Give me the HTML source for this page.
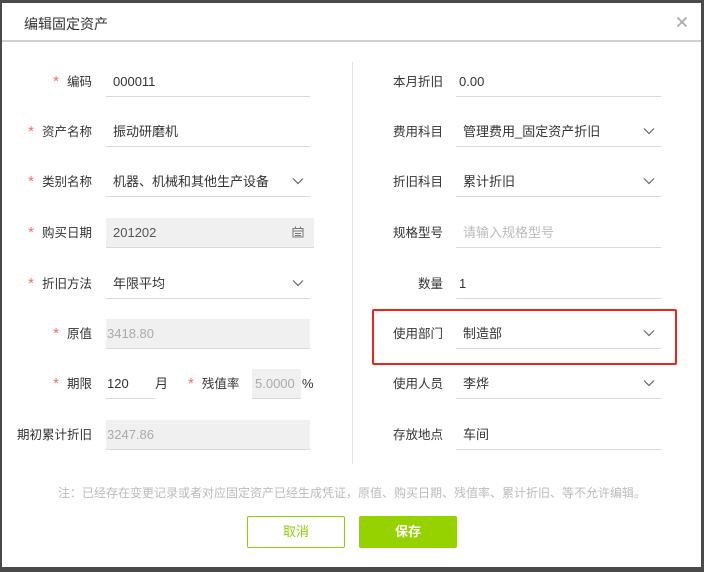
<!DOCTYPE html>
<html><head><meta charset="utf-8"><style>
*{margin:0;padding:0;box-sizing:border-box}
body{width:704px;height:572px;background:#4a4a4a;position:relative;overflow:hidden;font-family:"Liberation Sans","Noto Sans CJK SC",sans-serif;font-size:13px;color:#333}
.dlg{position:absolute;left:2px;top:3px;width:699px;height:564px;background:#fff}
.hd{position:absolute;left:2px;top:3px;width:699px;height:39px;border-bottom:2px solid #d0d0d0;background:#fff}
.t{position:absolute;left:22px;top:11px;font-size:14px;color:#333}
.x{position:absolute;left:674px;top:13px}
.a{position:absolute;white-space:nowrap;line-height:30px}
.lab{text-align:right;font-size:12.5px}
.req{color:#f56c6c;margin-right:8px;font-size:15px}
.in{position:absolute;height:30px;border-bottom:1px solid #d9d9d9;line-height:30px;padding-left:7px;white-space:nowrap}
.g{background:#f0f0f0;color:#aaa}
.ph{color:#bbb}
.ch{position:absolute;right:6px;top:10px}
</style></head><body>
<div class="dlg"></div>
<div class="hd"><div class="t">编辑固定资产</div>
<svg class="x" width="12" height="12" viewBox="0 0 12 12"><path d="M1.5 1.5L10.5 10.5M10.5 1.5L1.5 10.5" stroke="#aaa" stroke-width="1.8"/></svg></div>
<div style="position:absolute;left:352px;top:62px;width:1px;height:402px;background:#e2e2e2"></div>

<div class="a lab" style="right:612px;top:67px"><span class="req">*</span>编码</div>
<div class="a lab" style="right:612px;top:117px"><span class="req">*</span>资产名称</div>
<div class="a lab" style="right:612px;top:167px"><span class="req">*</span>类别名称</div>
<div class="a lab" style="right:612px;top:218px"><span class="req">*</span>购买日期</div>
<div class="a lab" style="right:612px;top:269px"><span class="req">*</span>折旧方法</div>
<div class="a lab" style="right:612px;top:319px"><span class="req">*</span>原值</div>
<div class="a lab" style="right:612px;top:369px"><span class="req">*</span>期限</div>
<div class="a lab" style="right:612px;top:420px">期初累计折旧</div>

<div class="in" style="left:106px;top:67px;width:204px">000011</div>
<div class="in" style="left:106px;top:117px;width:204px">振动研磨机</div>
<div class="in" style="left:106px;top:167px;width:204px">机器、机械和其他生产设备<svg class="ch" width="12" height="8" viewBox="0 0 12 8"><path d="M1 1.5L6 6.5L11 1.5" stroke="#666" fill="none" stroke-width="1.2"/></svg></div>
<div class="in g" style="left:106px;top:218px;width:208px;color:#555">201202<svg class="ch" style="right:10px;top:8px" width="12" height="12" viewBox="0 0 12 12"><path d="M1 2.5H11V11H1Z M1 5H11 M3.5 0.5V3 M8.5 0.5V3 M3 7.5H9 M3 9.5H9" stroke="#777" fill="none" stroke-width="1"/></svg></div>
<div class="in" style="left:106px;top:269px;width:204px">年限平均<svg class="ch" width="12" height="8" viewBox="0 0 12 8"><path d="M1 1.5L6 6.5L11 1.5" stroke="#666" fill="none" stroke-width="1.2"/></svg></div>
<div class="in g" style="left:106px;top:319px;width:204px;padding-left:1px">3418.80</div>
<div class="in" style="left:106px;top:369px;width:49px;padding-left:1px">120</div>
<div class="a" style="left:155px;top:369px">月</div>
<div class="a lab" style="left:188px;top:369px"><span class="req">*</span>残值率</div>
<div class="in g" style="left:252px;top:369px;width:49px;padding-left:3px">5.0000</div>
<div class="a" style="left:302px;top:369px">%</div>
<div class="in g" style="left:106px;top:420px;width:204px;padding-left:1px">3247.86</div>

<div class="a lab" style="right:261px;top:67px">本月折旧</div>
<div class="a lab" style="right:261px;top:117px">费用科目</div>
<div class="a lab" style="right:261px;top:167px">折旧科目</div>
<div class="a lab" style="right:261px;top:218px">规格型号</div>
<div class="a lab" style="right:261px;top:269px">数量</div>
<div class="a lab" style="right:261px;top:319px">使用部门</div>
<div class="a lab" style="right:261px;top:369px">使用人员</div>
<div class="a lab" style="right:261px;top:420px">存放地点</div>

<div class="in" style="left:456px;top:67px;width:205px;padding-left:3px">0.00</div>
<div class="in" style="left:456px;top:117px;width:205px">管理费用_固定资产折旧<svg class="ch" width="12" height="8" viewBox="0 0 12 8"><path d="M1 1.5L6 6.5L11 1.5" stroke="#666" fill="none" stroke-width="1.2"/></svg></div>
<div class="in" style="left:456px;top:167px;width:205px">累计折旧<svg class="ch" width="12" height="8" viewBox="0 0 12 8"><path d="M1 1.5L6 6.5L11 1.5" stroke="#666" fill="none" stroke-width="1.2"/></svg></div>
<div class="in ph" style="left:456px;top:218px;width:205px">请输入规格型号</div>
<div class="in" style="left:456px;top:269px;width:205px;padding-left:3px">1</div>
<div class="in" style="left:456px;top:319px;width:205px">制造部<svg class="ch" width="12" height="8" viewBox="0 0 12 8"><path d="M1 1.5L6 6.5L11 1.5" stroke="#666" fill="none" stroke-width="1.2"/></svg></div>
<div class="in" style="left:456px;top:369px;width:205px">李烨<svg class="ch" width="12" height="8" viewBox="0 0 12 8"><path d="M1 1.5L6 6.5L11 1.5" stroke="#666" fill="none" stroke-width="1.2"/></svg></div>
<div class="in" style="left:456px;top:420px;width:205px">车间</div>

<div style="position:absolute;left:372px;top:309px;width:305px;height:56px;border:2px solid #f0221b;border-radius:2px"></div>

<div class="a" style="left:58px;top:478px;font-size:12px;color:#bbb">注：已经存在变更记录或者对应固定资产已经生成凭证，原值、购买日期、残值率、累计折旧、等不允许编辑。</div>

<div style="position:absolute;left:247px;top:516px;width:98px;height:32px;border:1px solid #8fce00;border-radius:2px;color:#8fce00;text-align:center;line-height:30px">取消</div>
<div style="position:absolute;left:359px;top:516px;width:98px;height:32px;background:#96d100;border-radius:2px;color:#fff;text-align:center;line-height:32px;font-weight:bold">保存</div>
</body></html>
